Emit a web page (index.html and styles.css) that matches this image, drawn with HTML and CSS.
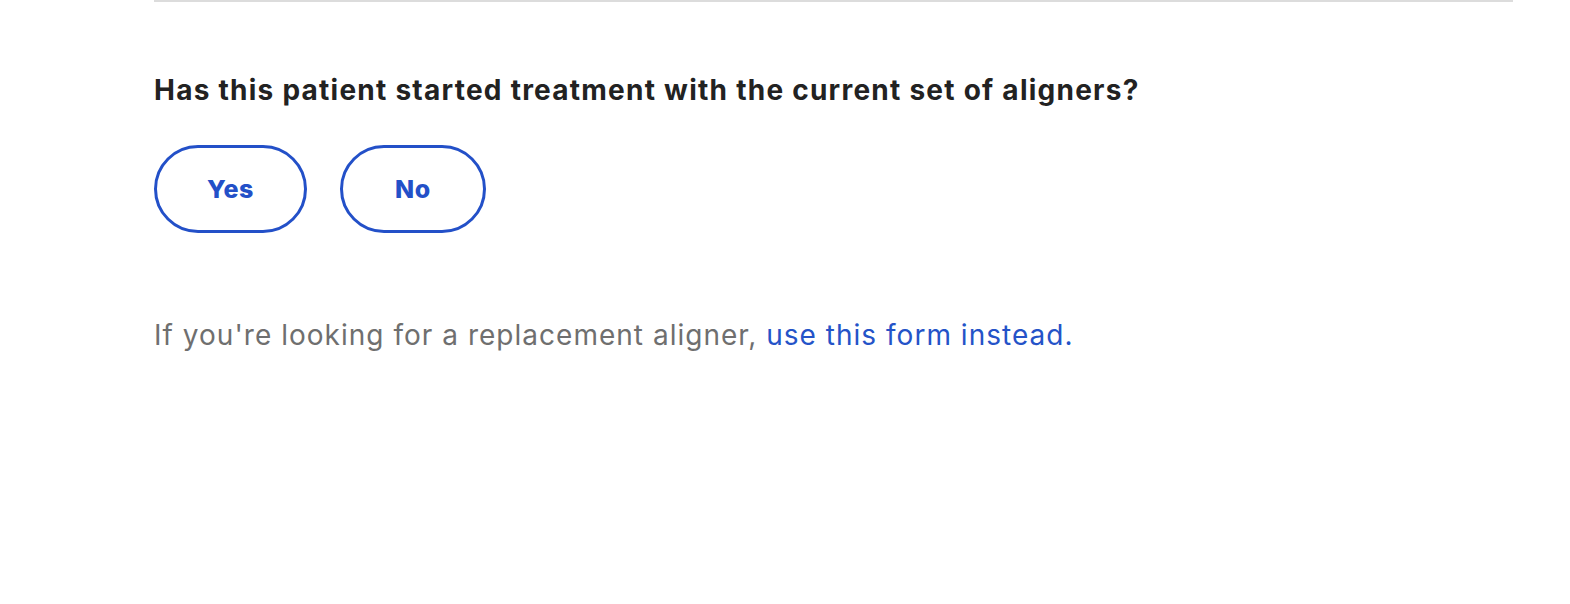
FILE: index.html
```html
<!DOCTYPE html>
<html lang="en">
<head>
  <meta charset="UTF-8">
  <title>Aligner treatment</title>
  <link rel="stylesheet" href="styles.css">
</head>
<body>
  <div class="container">
    <hr class="divider">
    <h2 class="question">Has this patient started treatment with the current set of aligners?</h2>
    <div class="choices">
      <button type="button" class="choice">Yes</button>
      <button type="button" class="choice choice-no">No</button>
    </div>
    <p class="hint">If you're looking for a replacement aligner, <a href="#">use this form instead.</a></p>
  </div>
</body>
</html>
```

FILE: styles.css
```css
body { margin: 0; font-family: Inter, "Open Sans", sans-serif; background: #fff; color: #222; }
.container { width: 1359px; margin-left: 154px; }
.divider { border: none; height: 2px; background: #dcdcdc; margin: 0; }
.question { font-size: 28px; font-weight: 700; margin: 70px 0 0; line-height: 36px; color: #222; letter-spacing: 1.25px; }
.choices { display: flex; gap: 33px; margin-top: 37px; }
.choice {
  width: 153px; height: 88px; border: 3px solid #2350c8; border-radius: 44px;
  background: #fff; color: #2350c8; font-family: inherit; font-size: 25px; font-weight: 800;
  letter-spacing: 0.6px; cursor: pointer;
}
.choice-no { width: 146px; }
.hint { font-size: 28px; color: #6f6f6f; margin: 84px 0 0; line-height: 36px; letter-spacing: 1.02px; }
.hint a { color: #2453c8; text-decoration: none; }
```
